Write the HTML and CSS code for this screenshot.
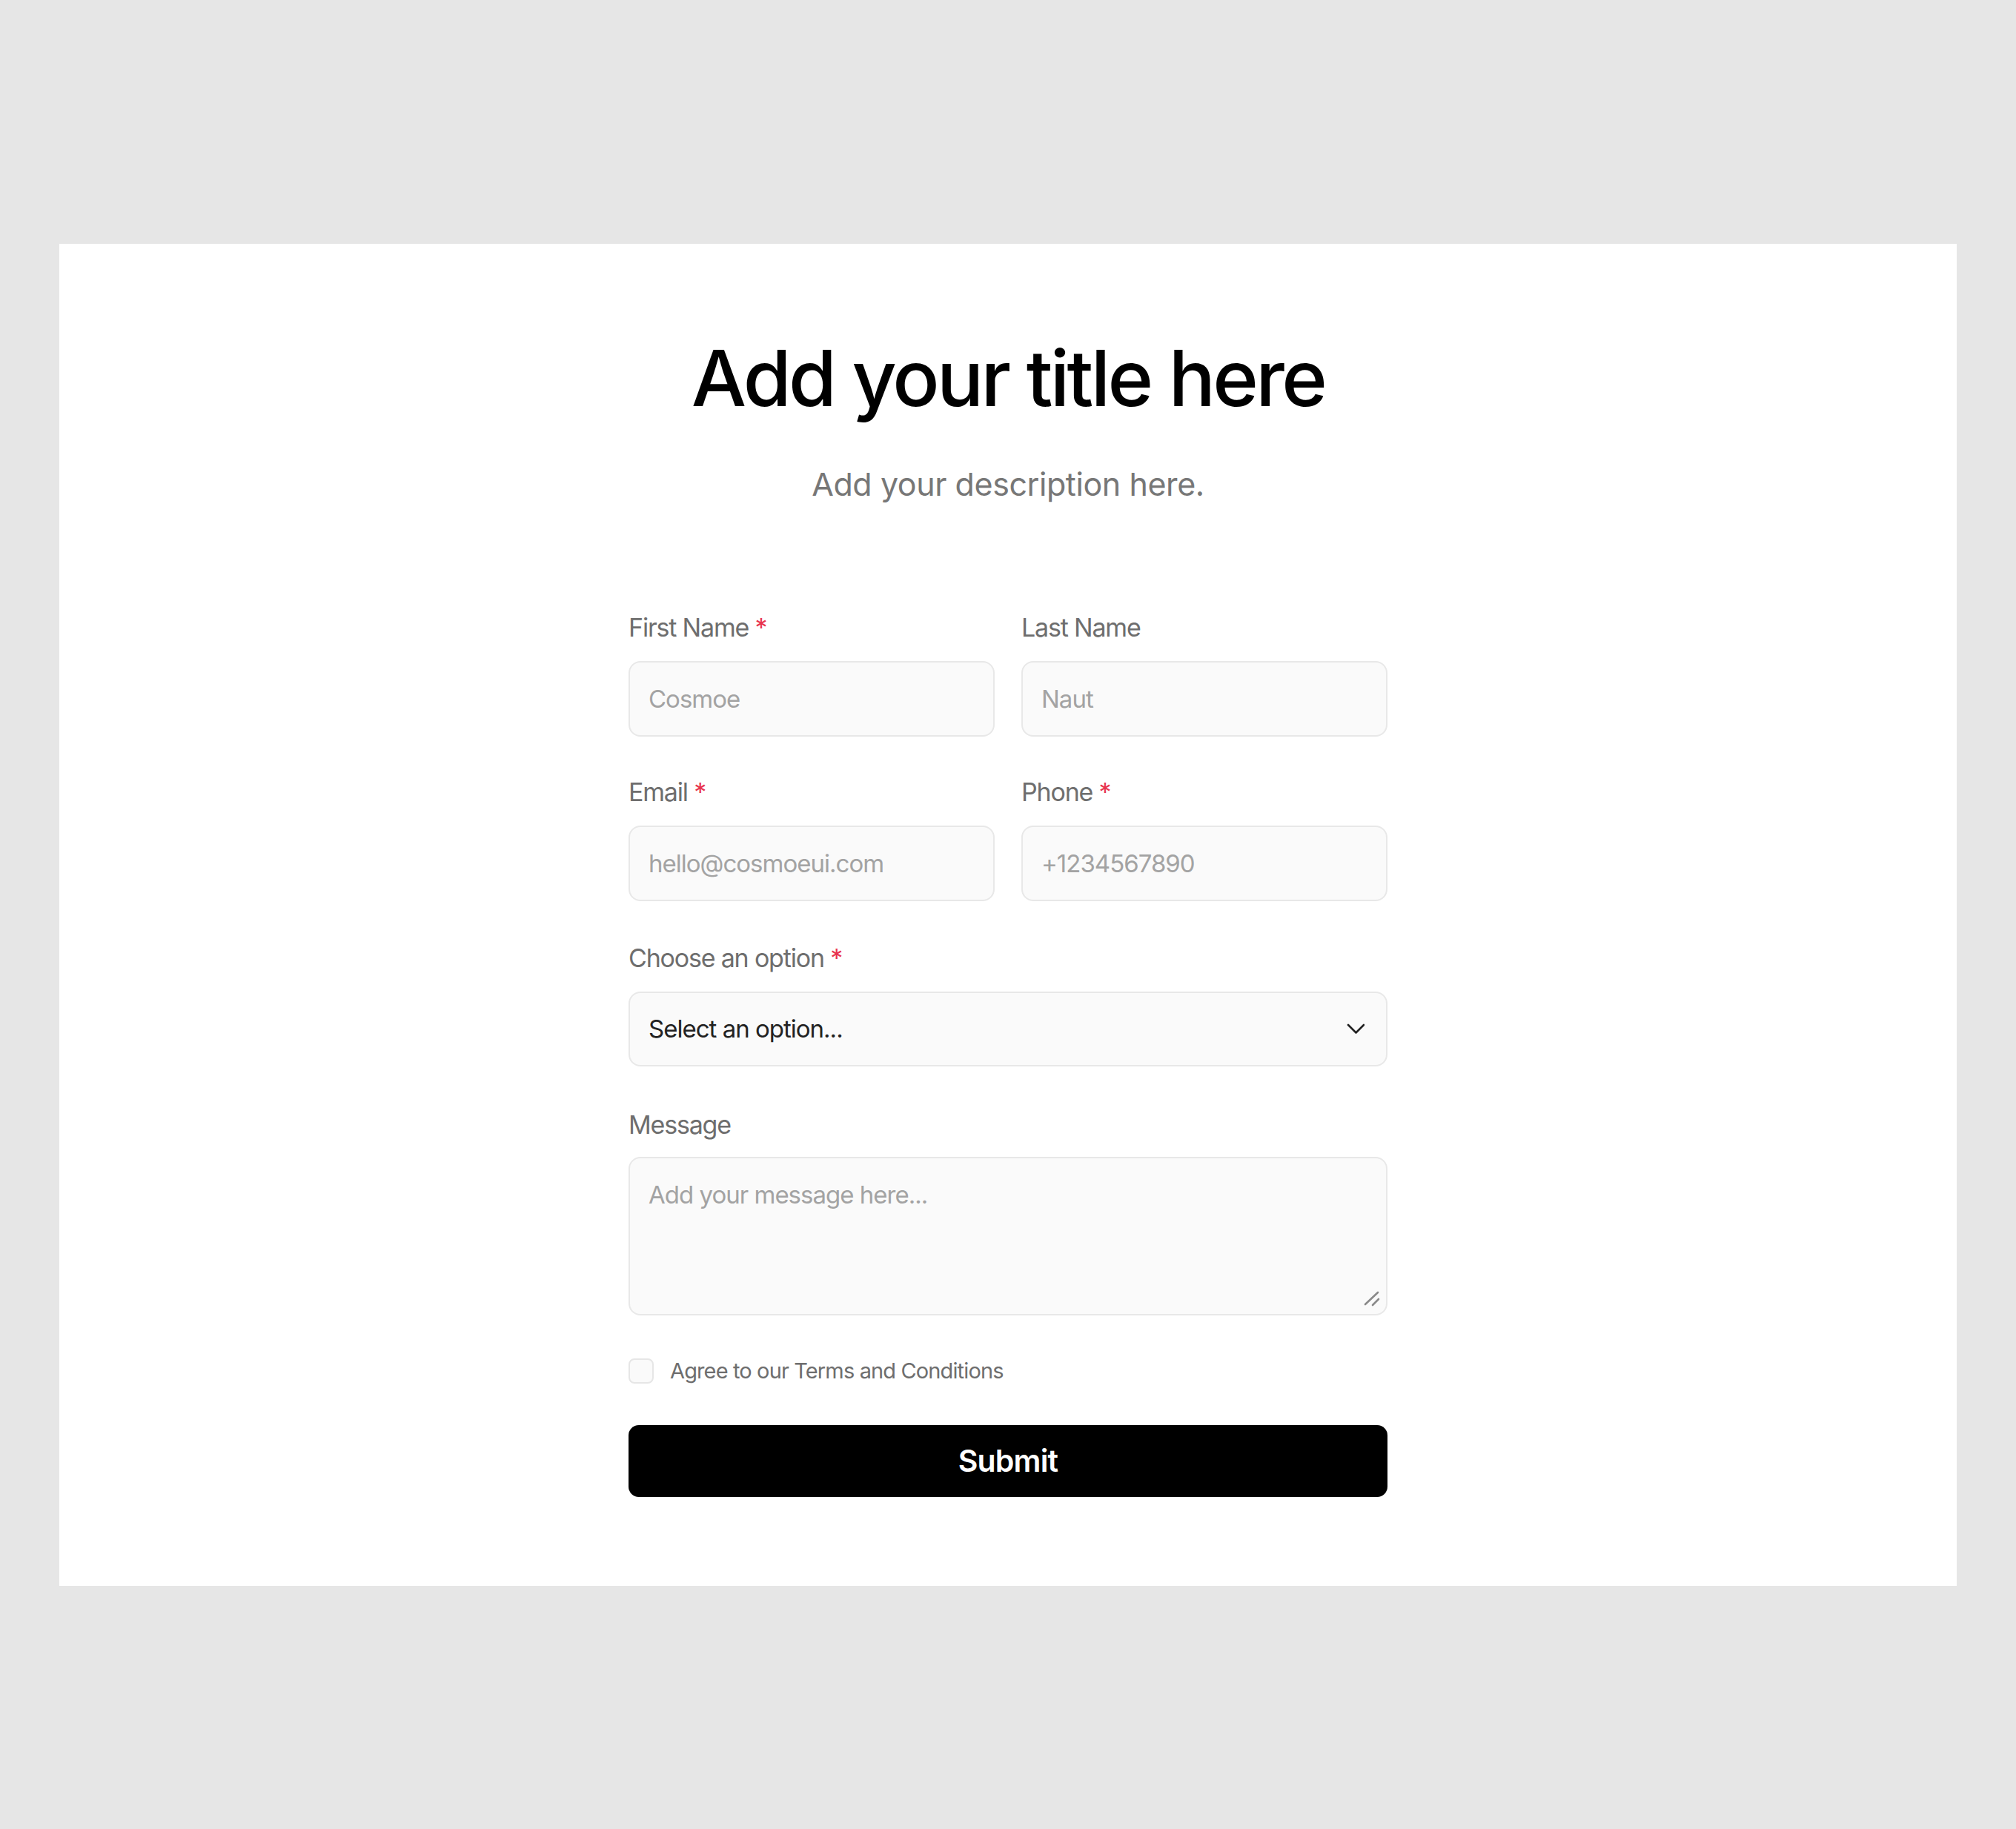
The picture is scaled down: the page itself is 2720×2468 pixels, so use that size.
FILE: index.html
```html
<!DOCTYPE html>
<html lang="en">
<head>
  <meta charset="UTF-8" />
  <meta name="viewport" content="width=device-width, initial-scale=1.0"/>
  <title>Contact Form</title>
  <link rel="stylesheet" href="styles.css">
</head>
<body>
  <div class="card">
    <h1 class="title">Add your title here</h1>
    <p class="subtitle">Add your description here.</p>

    <form class="form" onsubmit="return false;">
      <div class="row">
        <div class="field">
          <label for="firstName">First Name <span class="req">*</span></label>
          <input type="text" id="firstName" placeholder="Cosmoe">
        </div>
        <div class="field">
          <label for="lastName">Last Name</label>
          <input type="text" id="lastName" placeholder="Naut">
        </div>
      </div>

      <div class="row">
        <div class="field">
          <label for="email">Email <span class="req">*</span></label>
          <input type="email" id="email" placeholder="hello@cosmoeui.com">
        </div>
        <div class="field">
          <label for="phone">Phone <span class="req">*</span></label>
          <input type="tel" id="phone" placeholder="+1234567890">
        </div>
      </div>

      <div class="field field-select">
        <label for="option">Choose an option <span class="req">*</span></label>
        <div class="select-wrap">
          <select id="option">
            <option>Select an option...</option>
            <option>Option one</option>
            <option>Option two</option>
          </select>
          <svg class="chevron" width="24" height="14" viewBox="0 0 24 14" fill="none">
            <path d="M2 2l10.5 10.5L23 2" stroke="#222" stroke-width="2.6" stroke-linecap="round" stroke-linejoin="round"/>
          </svg>
        </div>
      </div>

      <div class="field field-message">
        <label for="message">Message</label>
        <div class="textarea-wrap">
          <textarea id="message" placeholder="Add your message here..."></textarea>
          <svg class="grip" width="24" height="24" viewBox="0 0 24 24" fill="none">
            <path d="M4 21L21 5M14 22l8-8" stroke="#8a8a8a" stroke-width="2.6" stroke-linecap="round"/>
          </svg>
        </div>
      </div>

      <label class="check">
        <input type="checkbox" id="terms">
        <span>Agree to our Terms and Conditions</span>
      </label>

      <button type="submit" class="submit">Submit</button>
    </form>
  </div>
</body>
</html>
```

FILE: styles.css
```css
* {
  box-sizing: border-box;
}

body {
  margin: 0;
  min-height: 100vh;
  display: flex;
  align-items: center;
  padding: 0 80px;
  background: #e6e6e6;
  font-family: Inter, 'Noto Sans', sans-serif;
  color: #000;
}

.card {
  width: 100%;
  background: #fff;
  padding: 116px 0 120px;
  display: flex;
  flex-direction: column;
  align-items: center;
}

.title {
  margin: 0;
  font-size: 105px;
  line-height: 130px;
  font-weight: 500;
  letter-spacing: -0.035em;
  color: #000;
}

.subtitle {
  margin: 47px 0 0;
  font-size: 43px;
  line-height: 62px;
  color: #777;
  letter-spacing: -0.01em;
}

.form {
  width: 1024px;
  margin-top: 143px;
  display: flex;
  flex-direction: column;
  gap: 55px;
}

.row {
  display: grid;
  grid-template-columns: 1fr 1fr;
  gap: 36px;
}

.field {
  display: flex;
  flex-direction: column;
}

.field > label {
  font-size: 34px;
  line-height: 40px;
  letter-spacing: -0.035em;
  color: #6e6e6e;
  margin-bottom: 25px;
}

.field-select {
  margin-top: 2px;
}

.field-message {
  margin-top: 4px;
}

.field-message > label {
  margin-bottom: 23px;
}

.req {
  color: #e8344e;
}

input, select, textarea {
  width: 100%;
  font-family: inherit;
  font-size: 33px;
  line-height: 40px;
  letter-spacing: -0.03em;
  padding: 29px 25px;
  border: 2px solid #e8e8e8;
  border-radius: 16px;
  background: #fafafa;
  color: #222;
  outline: none;
}

input::placeholder, textarea::placeholder {
  color: #a3a3a3;
}

.select-wrap, .textarea-wrap {
  position: relative;
}

select {
  appearance: none;
  -webkit-appearance: none;
  height: 101px;
  padding-top: 0;
  padding-bottom: 0;
  cursor: pointer;
}

.chevron {
  position: absolute;
  right: 31px;
  top: 43px;
  pointer-events: none;
}

textarea {
  display: block;
  height: 214px;
  resize: none;
}

.grip {
  position: absolute;
  right: 10px;
  bottom: 12px;
  pointer-events: none;
}

.check {
  display: flex;
  align-items: center;
  gap: 22px;
  font-size: 29px;
  line-height: 40px;
  letter-spacing: -0.03em;
  color: #6e6e6e;
  cursor: pointer;
}

.check input {
  appearance: none;
  -webkit-appearance: none;
  width: 34px;
  height: 34px;
  padding: 0;
  margin: 0;
  border: 2px solid #e6e6e6;
  border-radius: 8px;
  background: #fafafa;
}

.check input:checked {
  background: #000;
  border-color: #000;
}

.submit {
  height: 97px;
  margin-top: -2px;
  border: none;
  border-radius: 14px;
  background: #000;
  color: #fff;
  font-family: inherit;
  font-size: 41px;
  font-weight: 600;
  letter-spacing: -0.02em;
  cursor: pointer;
}

.submit:hover {
  background: #222;
}
```
